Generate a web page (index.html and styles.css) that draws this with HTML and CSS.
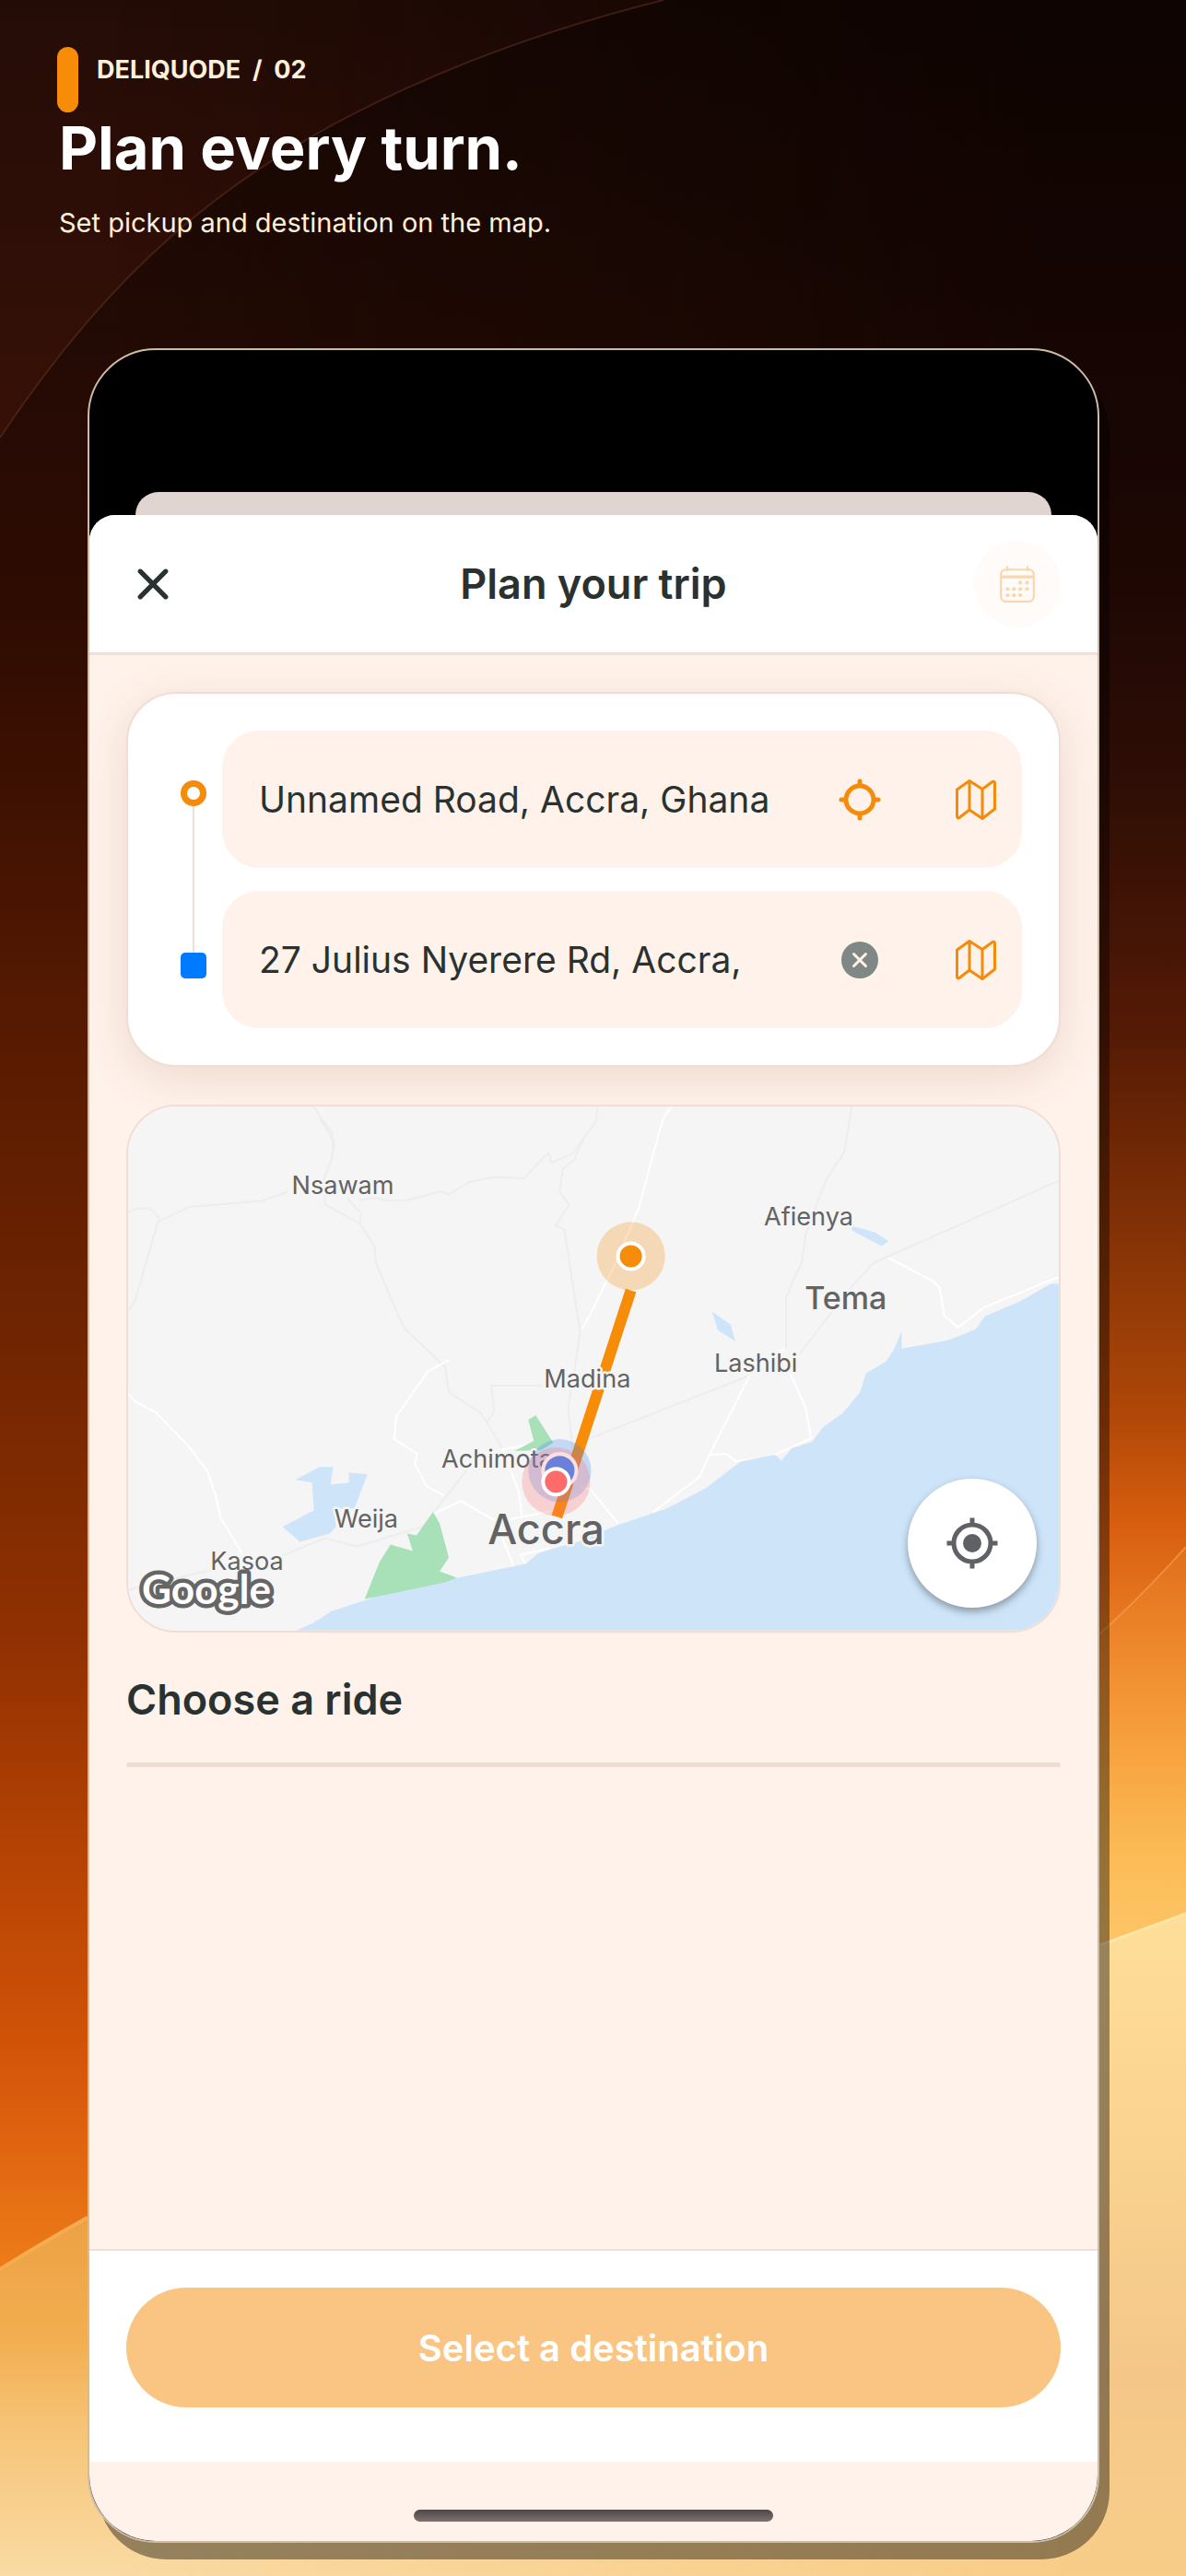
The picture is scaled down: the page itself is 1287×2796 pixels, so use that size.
FILE: index.html
```html
<!DOCTYPE html>
<html lang="en">
<head>
    <meta charset="UTF-8">
    <meta name="viewport" content="width=device-width, initial-scale=1.0">
    <title>Deliquode - Plan your trip</title>
    <link rel="stylesheet" href="styles.css">
</head>
<body>
    <!-- backdrop -->
    <svg class="backdrop" viewBox="0 0 1287 2796" preserveAspectRatio="none" aria-hidden="true">
        <defs>
            <linearGradient id="warmLeft" x1="0" y1="0" x2="0" y2="1">
                <stop offset="0" stop-color="#240c06"/>
                <stop offset=".11" stop-color="#300f07"/>
                <stop offset=".25" stop-color="#401002"/>
                <stop offset=".4" stop-color="#571a01"/>
                <stop offset=".52" stop-color="#702501"/>
                <stop offset=".64" stop-color="#923102"/>
                <stop offset=".72" stop-color="#b54304"/>
                <stop offset=".79" stop-color="#cf5208"/>
                <stop offset=".83" stop-color="#e06310"/>
                <stop offset=".88" stop-color="#ec7c18"/>
                <stop offset="1" stop-color="#f08a20"/>
            </linearGradient>
            <linearGradient id="warmRight" x1="0" y1="0" x2="0" y2="1">
                <stop offset="0" stop-color="#120502"/>
                <stop offset=".18" stop-color="#200704"/>
                <stop offset=".3" stop-color="#351006"/>
                <stop offset=".4" stop-color="#541a05"/>
                <stop offset=".48" stop-color="#843206"/>
                <stop offset=".55" stop-color="#b04808"/>
                <stop offset=".59" stop-color="#d65d0e"/>
                <stop offset=".63" stop-color="#e87a22"/>
                <stop offset=".67" stop-color="#f49a38"/>
                <stop offset=".72" stop-color="#fcbe58"/>
                <stop offset=".76" stop-color="#fccb70"/>
                <stop offset="1" stop-color="#fccb70"/>
            </linearGradient>
            <linearGradient id="fade">
                <stop offset=".1" stop-color="#000"/>
                <stop offset=".9" stop-color="#fff"/>
            </linearGradient>
            <linearGradient id="duneRight" x1="0" y1="2060" x2="0" y2="2796" gradientUnits="userSpaceOnUse">
                <stop offset="0" stop-color="#fedf9a"/>
                <stop offset=".3" stop-color="#fbd591"/>
                <stop offset=".7" stop-color="#f4c789"/>
                <stop offset="1" stop-color="#f8cd88"/>
            </linearGradient>
            <linearGradient id="duneLeft" x1="0" y1="2400" x2="0" y2="2796" gradientUnits="userSpaceOnUse">
                <stop offset="0" stop-color="#eca044"/>
                <stop offset=".35" stop-color="#f2ae50"/>
                <stop offset=".6" stop-color="#f6c478"/>
                <stop offset="1" stop-color="#fadba4"/>
            </linearGradient>
            <linearGradient id="shade" x1="0" y1="0" x2="0" y2="1">
                <stop offset="0" stop-color="#0a0301" stop-opacity=".5"/>
                <stop offset=".6" stop-color="#0a0301" stop-opacity=".3"/>
                <stop offset="1" stop-color="#0a0301" stop-opacity="0"/>
            </linearGradient>
            <mask id="toRight"><rect width="1287" height="2796" fill="url(#fade)"/></mask>
        </defs>
        <rect width="1287" height="2796" fill="url(#warmLeft)"/>
        <rect width="1287" height="2796" fill="url(#warmRight)" mask="url(#toRight)"/>
        <path d="M0 475C60 385 130 300 214 233C340 130 520 50 720 0H1287V1100H0Z" fill="url(#shade)"/>
        <path d="M0 475C60 385 130 300 214 233C340 130 520 50 720 0" fill="none" stroke="#6a3a28" stroke-opacity=".45" stroke-width="2"/>
        <path d="M1100 1850Q1192 1784 1287 1679V2120H1100Z" fill="#ffb04a" fill-opacity=".15"/>
        <path d="M1100 1850Q1192 1784 1287 1679" fill="none" stroke="#f6a458" stroke-opacity=".6" stroke-width="2"/>
        <path d="M0 2463Q50 2432 95 2407Q300 2300 600 2300H1287V2796H0Z" fill="url(#duneLeft)"/>
        <path d="M0 2463Q50 2432 95 2407" fill="none" stroke="#f8ac50" stroke-width="4"/>
        <path d="M1150 2128L1192 2112L1287 2077V2796H1150Z" fill="url(#duneRight)"/>
        <path d="M200 2500H1150V2796H0V2600Z" fill="url(#duneRight)" mask="url(#toRight)"/>
        <path d="M1150 2128L1192 2112L1287 2077" fill="none" stroke="#ffe6a8" stroke-width="3"/>
    </svg>

    <!-- headline -->
    <header class="hero">
        <div class="eyebrow"><span class="pill"></span><span class="eyebrow-text">DELIQUODE&nbsp; /&nbsp; 02</span></div>
        <h1>Plan every turn.</h1>
        <p>Set pickup and destination on the map.</p>
    </header>

    <!-- phone -->
    <main class="phone">
        <div class="behind"></div>
        <div class="sheet">
            <div class="sheet-header">
                <button class="close" aria-label="Close">
                    <svg width="36" height="36" viewBox="0 0 34 34" fill="none" stroke="#2a3231" stroke-width="5" stroke-linecap="round"><path d="M4 4L30 30M30 4L4 30"/></svg>
                </button>
                <h2>Plan your trip</h2>
                <button class="calendar" aria-label="Schedule" disabled>
                    <svg width="42" height="42" viewBox="0 0 40 40" fill="none" stroke="#fbd6ab" stroke-width="2">
                        <rect x="3" y="5" width="34" height="33" rx="5"/>
                        <path d="M3 12.500H37" stroke-width="3"/>
                        <path d="M9.500 2V6M30.500 2V6" stroke-linecap="round"/>
                        <g fill="#fbd6ab" stroke="none">
                            <circle cx="23" cy="18.500" r="2"/><circle cx="30" cy="18.500" r="2"/>
                            <circle cx="10" cy="25" r="2"/><circle cx="16.500" cy="25" r="2"/><circle cx="23" cy="25" r="2"/><circle cx="30" cy="25" r="2"/>
                            <circle cx="10" cy="31.500" r="2"/><circle cx="16.500" cy="31.500" r="2"/><circle cx="23" cy="31.500" r="2"/>
                        </g>
                    </svg>
                </button>
            </div>

            <div class="content">
                <form class="stops">
                    <div class="rail"><span class="ring"></span><span class="line"></span><span class="square"></span></div>
                    <div class="fields">
                        <div class="field">
                            <input type="text" aria-label="Pickup" value="Unnamed Road, Accra, Ghana">
                            <button type="button" class="icon" aria-label="Use my location">
                                <svg width="46" height="46" viewBox="0 0 46 46" fill="none" stroke="#f58b0a" stroke-width="5" stroke-linecap="round"><circle cx="23" cy="23" r="15"/><path d="M23 3V7M23 39V43M3 23H7M39 23H43"/></svg>
                            </button>
                            <button type="button" class="icon" aria-label="Pick pickup on map">
                                <svg width="46" height="46" viewBox="0 0 46 46" fill="none" stroke="#f58b0a" stroke-width="3" stroke-linejoin="round"><path d="M16 2.500L30 11.500L41 3.500Q43.500 2.500 43.500 5V33L30 43.500L16 34L5 42.500Q2.500 43.500 2.500 41V12ZM16 2.500V34M30 11.500V43.500"/></svg>
                            </button>
                        </div>
                        <div class="field">
                            <input type="text" aria-label="Destination" value="27 Julius Nyerere Rd, Accra,">
                            <button type="button" class="icon" aria-label="Clear destination">
                                <svg width="42" height="42" viewBox="0 0 42 42"><circle cx="21" cy="21" r="20" fill="#7f8885"/><path d="M14.500 14.500L27.500 27.500M27.500 14.500L14.500 27.500" stroke="#fff2ea" stroke-width="3" stroke-linecap="round"/></svg>
                            </button>
                            <button type="button" class="icon" aria-label="Pick destination on map">
                                <svg width="46" height="46" viewBox="0 0 46 46" fill="none" stroke="#f58b0a" stroke-width="3" stroke-linejoin="round"><path d="M16 2.500L30 11.500L41 3.500Q43.500 2.500 43.500 5V33L30 43.500L16 34L5 42.500Q2.500 43.500 2.500 41V12ZM16 2.500V34M30 11.500V43.500"/></svg>
                            </button>
                        </div>
                    </div>
                </form>

                <div class="map">
                    <svg class="map-canvas" viewBox="0 0 1007 567" preserveAspectRatio="xMidYMid slice" role="img" aria-label="Map of Accra">
                        <rect width="1007" height="567" fill="#f5f5f5"/>
                        <!-- main roads -->
                        <g fill="none" stroke="#ededed" stroke-width="2" stroke-linejoin="round">
                            <path d="M200 0L220 28L222 43L220 58L212 78L213 106L251 127L267 152L268 169L298 239L343 282L347 309L382 332L405 370"/>
                            <path d="M208 13L223 39L221 54M237 99L252 116L251 127"/>
                            <path d="M0 115L8 111L23 110L36 123L65 109L145 102L173 92M36 123L32 125L7 212L0 221"/>
                            <path d="M250 101L270 99L280 102L300 102L338 92L348 95L368 82L397 76L428 78L455 50L458 61L481 51L506 16L508 0"/>
                            <path d="M493 34L483 57L470 68L467 92L477 106L463 129L472 133L489 244L483 286L476 326L481 370"/>
                            <path d="M447 302H393L396 330L388 342M480 366L500 359L670 292"/>
                            <path d="M783 0L775 49L755 80L733 139L729 168L712 206V263"/>
                            <path d="M1008 80L807 169L780 198L727 267"/>
                            <path d="M367 393L318 455L247 476L213 467L167 486M88 502L0 523"/>
                        </g>
                        <!-- minor roads -->
                        <g fill="none" stroke="#fff" stroke-width="2" stroke-linejoin="round">
                            <path d="M347 274L324 287L290 336L288 360L313 376L310 386L323 411L342 421"/>
                            <path d="M0 310L7 319L30 331L65 367L86 395L95 422L100 445L123 483"/>
                            <path d="M330 441L360 427L397 448M405 370L423 418L426 443M398 451L417 497M403 449L457 438M430 495L424 485L457 478"/>
                            <path d="M588 0Q579 10 575 26L553 108L530 164L500 225L491 241"/>
                            <path d="M698 268L711 262M717 290L733 326L739 359L693 380L658 384L647 376L629 377"/>
                            <path d="M672 292L629 377L618 401L568 439M490 412L500 414L530 451"/>
                            <path d="M823 164L871 189L878 196L883 226L898 239L927 217L1008 184M405 371L440 365"/>
                        </g>
                        <!-- water -->
                        <g fill="#cee5f9">
                            <path d="M1008 192L998 192L967 210L927 227L917 241L887 253L837 262V243L828 264L820 276L798 289L792 309L773 332L752 347L740 363L718 370L707 383L700 377L663 384L625 413L583 435L530 453L515 459L487 471L457 479L443 484L430 495L357 510L267 531L220 546L200 559L182 567H1008Z"/>
                            <path d="M181 404L207 390H222L219 409L239 407V396L259 398L245 435L223 435L225 455L218 462L186 471L167 455L201 437L199 407Z"/>
                            <path d="M783 129L808 136L823 146L815 151L783 134ZM632 222L652 236L657 254L638 242Z"/>
                        </g>
                        <!-- parks -->
                        <path fill="#a8e0b7" d="M330 439L337 451L347 488L337 503L356 510L343 515L267 531L256 533L272 493L284 474L308 481L302 462L312 464ZM433 339L441 334L460 364L447 372L418 373L439 362Z"/>
                        <!-- route and places -->
                        <path d="M544 199L464 444" stroke="#f78c08" stroke-width="12"/>
                        <g class="places">
                            <text x="177" y="95">Nsawam</text>
                            <text x="688" y="129">Afienya</text>
                            <text x="634" y="287">Lashibi</text>
                            <text x="450" y="304">Madina</text>
                            <text x="339" y="391">Achimota</text>
                            <text x="223" y="456">Weija</text>
                            <text x="89" y="502">Kasoa</text>
                            <text class="town" x="732" y="219">Tema</text>
                            <text class="city" x="389" y="474">Accra</text>
                        </g>
                        <text class="google" x="15" y="538">Google</text>
                        <!-- pins -->
                        <circle cx="544" cy="162" r="37" fill="#f78c08" fill-opacity=".26"/>
                        <circle cx="544" cy="162" r="14" fill="#f78c08" stroke="#fff" stroke-width="4"/>
                        <circle cx="467" cy="394" r="34" fill="#3b82f6" fill-opacity=".26"/>
                        <circle cx="463" cy="406" r="37" fill="#ff6b6b" fill-opacity=".26"/>
                        <circle cx="467" cy="394" r="18" fill="#6b80d8" stroke="#fddfe0" stroke-width="4"/>
                        <circle cx="463" cy="406" r="14" fill="#ff6b6b" stroke="#fff" stroke-width="4"/>
                    </svg>
                    <button class="locate" aria-label="My location">
                        <svg width="60" height="60" viewBox="0 0 24 24" fill="#5f6166"><path d="M12 8a4 4 0 1 0 0 8a4 4 0 0 0 0-8zm8.940 3A8.990 8.990 0 0 0 13 3.060V1h-2v2.060A8.990 8.990 0 0 0 3.060 11H1v2h2.060A8.990 8.990 0 0 0 11 20.940V23h2v-2.060A8.990 8.990 0 0 0 20.940 13H23v-2h-2.060zM12 19a7 7 0 1 1 0-14a7 7 0 0 1 0 14z"/></svg>
                    </button>
                </div>

                <section class="rides">
                    <h3>Choose a ride</h3>
                    <hr>
                </section>
            </div>

            <div class="footer">
                <button class="select" disabled>Select a destination</button>
            </div>
            <div class="home"><span class="home-bar"></span></div>
        </div>
    </main>
</body>
</html>
```
FILE: styles.css
```css
*{
    box-sizing: border-box;
}
body{
    margin: 0;
    min-height: 100vh;
    position: relative;
    display: flex;
    flex-direction: column;
    background: #240c06;
    font-family: Inter, "Liberation Sans", sans-serif;
    color: #2a3231;
}
button{
    border: 0;
    padding: 0;
    background: none;
    font-family: inherit;
    display: flex;
    align-items: center;
    justify-content: center;
}
h1, h2, h3, p{
    margin: 0;
}
.backdrop{
    position: absolute;
    inset: 0;
    width: 100%;
    height: 100%;
    z-index: -1;
}
/* headline */
.hero{
    padding: 51px 62px 0;
}
.eyebrow{
    display: flex;
    gap: 20px;
}
.pill{
    width: 23px;
    height: 71px;
    border-radius: 12px;
    background: #f78c08;
}
.eyebrow-text{
    font-size: 27px;
    font-weight: 700;
    line-height: 50px;
    color: #fff0d8;
}
.hero h1{
    padding-left: 2px;
    font-size: 65px;
    font-weight: 700;
    line-height: 78px;
    color: #fff;
}
.hero p{
    margin-top: 22px;
    padding-left: 2px;
    font-size: 29px;
    line-height: 40px;
    color: #fff0d8;
}
/* phone */
.phone{
    flex: 1;
    display: flex;
    flex-direction: column;
    margin: 116px 94px 36px 95px;
    padding-top: 154px;
    border: 2px solid #cdbda4;
    border-radius: 74px;
    background: #000;
    overflow: hidden;
    box-shadow: 11px 18px 0 rgba(0, 0, 0, .4);
}
.behind{
    height: 25px;
    margin: 0 50px;
    border-radius: 25px 25px 0 0;
    background: #e0d5d0;
}
.sheet{
    flex: 1;
    display: flex;
    flex-direction: column;
    border-radius: 28px 28px 0 0;
    background: #fff2ea;
    overflow: hidden;
}
.sheet-header{
    display: grid;
    grid-template-columns: 1fr auto 1fr;
    align-items: center;
    height: 152px;
    padding: 0 40px;
    background: #fff;
    border-bottom: 3px solid #eedfd9;
}
.sheet-header h2{
    font-size: 45px;
    font-weight: 600;
}
.close{
    width: 58px;
    height: 94px;
}
.calendar{
    justify-self: end;
    width: 94px;
    height: 94px;
    border-radius: 50%;
    background: #fffbf8;
}
.content{
    flex: 1;
    display: flex;
    flex-direction: column;
    gap: 41px;
    padding: 40px;
}
/* pickup and destination */
.stops{
    display: flex;
    gap: 17px;
    padding: 40px 40px 40px 57px;
    border: 2px solid #f0ddd6;
    border-radius: 54px;
    background: #fff;
    box-shadow: 0 12px 48px rgba(130, 70, 40, .14);
}
.rail{
    display: flex;
    flex-direction: column;
    align-items: center;
    padding: 54px 0;
}
.ring{
    width: 28px;
    height: 28px;
    border: 7px solid #f58b0a;
    border-radius: 50%;
}
.line{
    flex: 1;
    width: 2px;
    background: #f0ddd6;
}
.square{
    width: 28px;
    height: 28px;
    border-radius: 5px;
    background: #007aff;
}
.fields{
    flex: 1;
    display: flex;
    flex-direction: column;
    gap: 25px;
}
.field{
    display: flex;
    align-items: center;
    height: 149px;
    padding: 0 8px 0 40px;
    border-radius: 40px;
    background: #fff2ea;
}
.field input{
    flex: 1;
    min-width: 0;
    padding: 0;
    border: 0;
    background: none;
    font-family: inherit;
    font-size: 39px;
    color: inherit;
}
.icon{
    width: 84px;
    height: 84px;
}
.icon + .icon{
    margin-left: 42px;
}
/* map */
.map{
    position: relative;
    border: 2px solid #f0ddd6;
    border-radius: 54px;
    overflow: hidden;
}
.map-canvas{
    display: block;
    width: 100%;
}
.places{
    font-size: 27px;
    fill: #636363;
    stroke: #f5f5f5;
    stroke-width: 5px;
    stroke-linejoin: round;
    paint-order: stroke;
}
.town{
    font-size: 34px;
    font-weight: 500;
}
.city{
    font-size: 45px;
    font-weight: 500;
}
.google{
    font-family: Lato, sans-serif;
    font-size: 44px;
    font-weight: 700;
    fill: #fff;
    stroke: #666;
    stroke-width: 9px;
    stroke-linejoin: round;
    paint-order: stroke;
}
.locate{
    position: absolute;
    right: 24px;
    bottom: 25px;
    width: 140px;
    height: 140px;
    border-radius: 50%;
    background: #fff;
    box-shadow: 0 4px 8px rgba(0, 0, 0, .35);
}
/* rides */
.rides h3{
    font-size: 45px;
    font-weight: 600;
    line-height: 63px;
}
.rides hr{
    height: 5px;
    margin: 37px 0 0;
    border: 0;
    border-radius: 3px;
    background: #f0ddd2;
}
.footer{
    padding: 40px 40px 59px;
    border-top: 2px solid #eedfd9;
    background: #fff;
}
.select{
    width: 100%;
    height: 130px;
    border-radius: 65px;
    background: #fac583;
    color: #fff;
    font-size: 40px;
    font-weight: 600;
}
.home{
    display: flex;
    justify-content: center;
    height: 86px;
    padding-top: 52px;
}
.home-bar{
    width: 390px;
    height: 13px;
    border-radius: 7px;
    background: linear-gradient(#4c4645, #7e7270);
}
```
